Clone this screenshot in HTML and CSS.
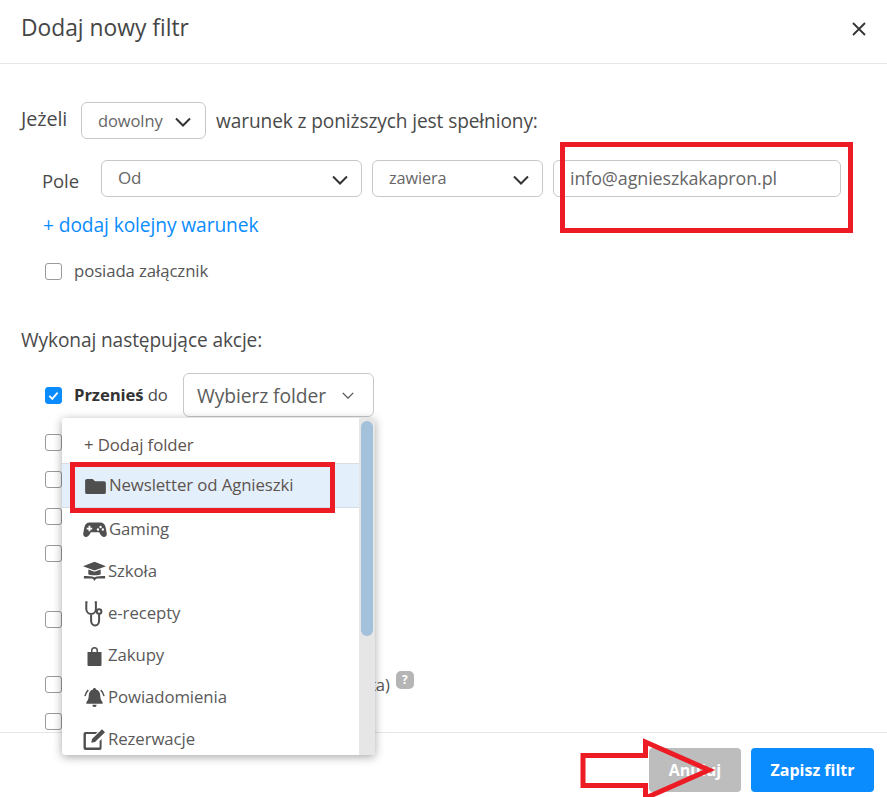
FILE: index.html
```html
<!DOCTYPE html>
<html lang="pl">
<head>
<meta charset="utf-8">
<title>Dodaj nowy filtr</title>
<link rel="stylesheet" href="styles.css">
</head>
<body>
<div class="modal">
  <header class="head">
    <h1 class="title">Dodaj nowy filtr</h1>
    <svg class="close" viewBox="0 0 14 14"><path d="M1 1l12 12M13 1L1 13"/></svg>
  </header>
  <main class="body">
    <div class="cond-line">
      <span class="cond-word">Jeżeli</span>
      <div class="select sel-any"><span>dowolny</span><svg class="chev" viewBox="0 0 16 10"><path d="M1 1.500l7 7 7-7"/></svg></div>
      <span>warunek z poniższych jest spełniony:</span>
    </div>
    <div class="field-line">
      <span class="field-word">Pole</span>
      <div class="select sel-field"><span>Od</span><svg class="chev" viewBox="0 0 16 10"><path d="M1 1.500l7 7 7-7"/></svg></div>
      <div class="select sel-op"><span>zawiera</span><svg class="chev" viewBox="0 0 16 10"><path d="M1 1.500l7 7 7-7"/></svg></div>
      <div class="select sel-value"><span>info@agnieszkakapron.pl</span></div>
    </div>
    <a class="add-cond">+ dodaj kolejny warunek</a>
    <div class="attach"><span class="box"></span><span class="attach-text">posiada załącznik</span></div>
    <div class="actions-head">Wykonaj następujące akcje:</div>
    <div class="move-line">
      <span class="box checked"><svg viewBox="0 0 18 18"><path d="M4 9.500l3.500 3.500L14 5.500"/></svg></span>
      <span class="move-label"><b>Przenieś</b> do</span>
      <div class="select sel-folder"><span>Wybierz folder</span><svg class="chev thin" viewBox="0 0 16 10"><path d="M2 2l6 6 6-6"/></svg></div>
    </div>
    <div class="box-list">
      <div class="box-row r1"><span class="box"></span></div>
      <div class="box-row r2"><span class="box"></span></div>
      <div class="box-row r2"><span class="box"></span></div>
      <div class="box-row r2"><span class="box"></span></div>
      <div class="box-row r3"><span class="box"></span></div>
      <div class="box-row r4"><span class="box"></span><span class="tail">ta)</span><span class="hint">?</span></div>
      <div class="box-row r2"><span class="box"></span></div>
    </div>
  </main>
  <footer class="foot">
    <button class="btn grey">Anuluj</button>
    <button class="btn blue">Zapisz filtr</button>
  </footer>

  <div class="menu">
    <div class="menu-list">
      <div class="item add">+ Dodaj folder</div>
      <div class="item active">
        <svg class="ico folder" viewBox="0 0 22 18"><path d="M2 1h6l2.500 2.500H20a2 2 0 0 1 2 2V15a2 2 0 0 1-2 2H2a2 2 0 0 1-2-2V3a2 2 0 0 1 2-2z"/></svg>
        <span>Newsletter od Agnieszki</span>
      </div>
      <div class="item">
        <svg class="ico pad" viewBox="0 0 26 18"><path fill-rule="evenodd" d="M7 1.500h12c3 0 5 2 5.700 6l1 5.500c.4 2.500-1 4-3 4-1.600 0-2.700-1-3.700-2.300L17.500 12h-9L7 14.700C6 16 4.900 17 3.300 17c-2 0-3.400-1.500-3-4l1-5.500C2 3.500 4 1.500 7 1.500zM6 5v2H4v2h2v2h2V9h2V7H8V5zm13 0a1.300 1.300 0 1 0 0 2.600A1.300 1.300 0 0 0 19 5zm-2.800 2.700a1.300 1.300 0 1 0 0 2.600 1.300 1.300 0 0 0 0-2.600zM21.500 7.700a1.300 1.300 0 1 0 0 2.600 1.300 1.300 0 0 0 0-2.600z"/></svg>
        <span>Gaming</span>
      </div>
      <div class="item">
        <svg class="ico tall" viewBox="0 0 26 22"><path d="M13 0L26 5 13 10 0 5zM6 8.800L13 11.300 20 8.800V14C18 15.500 8 15.500 6 14zM1 16c4 0 9 0 12 1.500C16 16 21 16 25 16v3h-9c-1 0-2 1-3 2.700C12 20 11 19 10 19H1z"/></svg>
        <span>Szkoła</span>
      </div>
      <div class="item">
        <svg class="ico steth" viewBox="0 0 20 26"><path d="M3 1.200H1.800V8c0 3 2.200 5 4.800 5s4.800-2 4.800-5V1.200h-1.200M6.600 13v6.500c0 3 1.800 5 4 5s4-2 4-5V13"/><circle cx="14.600" cy="10.500" r="2.300"/></svg>
        <span>e-recepty</span>
      </div>
      <div class="item">
        <svg class="ico bag" viewBox="0 0 14 19"><path fill-rule="evenodd" d="M3.500 5V3.500a3.500 3.500 0 0 1 7 0V5H14v13a1 1 0 0 1-1 1H1a1 1 0 0 1-1-1V5zM5 5h4V3.500a2 2 0 0 0-4 0z"/></svg>
        <span>Zakupy</span>
      </div>
      <div class="item">
        <svg class="ico tall" viewBox="0 0 22 22"><path d="M11 1c1 0 1.500.6 1.600 1.600C15.500 3.300 17 6 17 9c0 3 .9 5 2.500 7v1.500h-17V16C4.100 14 5 12 5 9c0-3 1.500-5.700 4.400-6.400C9.500 1.600 10 1 11 1zM8.800 18.500h4.400c0 1.300-1 2.500-2.200 2.500s-2.200-1.200-2.200-2.500z"/><path class="wave" d="M4.500 3.300C2.800 4.800 1.500 6.800 1 9.500M17.500 3.300c1.700 1.500 3 3.500 3.500 6.200"/></svg>
        <span>Powiadomienia</span>
      </div>
      <div class="item">
        <svg class="ico tall" viewBox="0 0 22 21"><path fill-rule="evenodd" d="M3 3h11l-2 2H3a.6.6 0 0 0-.6.6V18c0 .3.3.6.6.6h12.500c.3 0 .6-.3.6-.6v-6l2-2v9a2 2 0 0 1-2 2H2a2 2 0 0 1-2-2V5a2 2 0 0 1 2-2zM18.500.2l3 3L11.500 13l-3.700.8.700-3.700z"/></svg>
        <span>Rezerwacje</span>
      </div>
    </div>
    <div class="track"><div class="thumb"></div></div>
  </div>

  <svg class="marks" viewBox="0 0 887 797">
    <rect x="562.500" y="144.500" width="288" height="86"/>
    <rect x="72.500" y="464.500" width="260" height="46"/>
    <path d="M583 755.500H645.500V742L709 770L645.500 798V785.500H583Z"/>
  </svg>
</div>
</body>
</html>
```
FILE: styles.css
```css
* { box-sizing: border-box; }
html, body { margin: 0; padding: 0; background: #fff; }
body {
  font-family: "Open Sans", "Noto Sans", sans-serif;
  color: #4d4d4d;
  font-size: 16px;
  overflow: hidden;
}
.modal {
  position: relative;
  width: 887px;
  height: 797px;
  display: flex;
  flex-direction: column;
  overflow: hidden;
}
.head {
  height: 64px;
  flex: none;
  display: flex;
  align-items: flex-start;
  justify-content: space-between;
  padding: 10px 21px 0 21px;
  border-bottom: 1px solid #e6e6e6;
}
.title {
  margin: 0;
  font-size: 22.800px;
  line-height: 36px;
  font-weight: 400;
  color: #454545;
}
.close { width: 14px; height: 14px; margin-top: 12px; fill: none; stroke: #333; stroke-width: 1.800; }
.body {
  flex: 1;
  min-height: 0;
  overflow: hidden;
  padding: 38px 0 0 21px;
  letter-spacing: -0.1px;
}
.cond-line {
  display: flex;
  align-items: center;
  height: 37px;
  gap: 10px;
  font-size: 19.100px;
  color: #4a4a4a;
}
.cond-word { width: 50px; flex: none; margin-top: -4px; font-size: 19.800px; }
.select {
  display: flex;
  align-items: center;
  justify-content: space-between;
  height: 37px;
  flex: none;
  border: 1px solid #c8c8c8;
  border-radius: 6px;
  padding: 0 16px;
  font-size: 16.500px;
  color: #666;
  background: #fff;
}
.chev { width: 16px; height: 10px; margin-top: 3px; fill: none; stroke: #333; stroke-width: 2; flex: none; }
.chev.thin { width: 14px; height: 9px; margin-top: 0; stroke: #555; stroke-width: 1.600; }
.sel-any { width: 125px; padding-right: 14px; }
.field-line {
  display: flex;
  align-items: center;
  height: 37px;
  margin: 21px 0 0 21px;
  gap: 10px;
}
.field-word { width: 49px; margin: 4px 0 0 0; font-size: 18.500px; color: #4a4a4a; }
.sel-field { width: 261px; padding-right: 13px; font-size: 17px; }
.sel-field span, .sel-op span { margin-top: -2px; }
.sel-op { width: 171px; padding-right: 13px; font-size: 16.300px; }
.sel-value { width: 288px; padding-left: 16px; font-size: 17.900px; }
.sel-value span { margin-top: -2px; }
.add-cond {
  display: block;
  margin: 16px 0 0 22px;
  font-size: 19.200px;
  line-height: 24px;
  color: #0a8cff;
}
.attach {
  display: flex;
  align-items: center;
  gap: 12px;
  height: 20px;
  margin: 24px 0 0 24px;
  font-size: 16.800px;
  color: #555;
}
.attach-text { margin-top: -2px; }
.box {
  display: block;
  flex: none;
  width: 17px;
  height: 17px;
  border: 1px solid #9a9a9a;
  border-radius: 3px;
  background: #fff;
}
.box.checked { background: #0a8cff; border-color: #0a8cff; }
.box.checked svg { display: block; width: 15px; height: 15px; fill: none; stroke: #fff; stroke-width: 2.200; }
.actions-head {
  margin-top: 47px;
  font-size: 19.100px;
  line-height: 24px;
  color: #4a4a4a;
}
.move-line {
  display: flex;
  align-items: center;
  height: 44px;
  margin: 21px 0 0 24px;
}
.move-label { margin: -2px 0 0 12px; width: 109px; flex: none; font-size: 16.700px; color: #4d4d4d; }
.move-label b { color: #333; font-weight: 700; }
.sel-folder {
  width: 191px;
  height: 44px;
  padding: 0 18px 0 13px;
  font-size: 19.300px;
  color: #5c5c5c;
}
.box-list { margin: 17px 0 0 24px; }
.box-row { display: flex; align-items: center; height: 17px; }
.r1 { margin-top: 0; }
.r2 { margin-top: 20px; }
.r3 { margin-top: 49px; }
.r4 { margin-top: 48px; }
.tail { margin-left: 308px; font-size: 16.700px; color: #555; }
.hint {
  margin-left: 6px;
  margin-top: -10px;
  width: 18px;
  height: 18px;
  border-radius: 5px;
  background: #b5b5b5;
  color: #fff;
  font-size: 12px;
  font-weight: 700;
  line-height: 18px;
  text-align: center;
}
.foot {
  flex: none;
  height: 65px;
  border-top: 1px solid #e6e6e6;
  display: flex;
  justify-content: flex-end;
  gap: 10px;
  padding: 15px 13px 0 0;
}
.btn {
  height: 44px;
  border: 0;
  border-radius: 4px;
  font-family: inherit;
  font-size: 16px;
  font-weight: 700;
  color: #fff;
  padding: 0;
}
.btn.grey { width: 92px; background: #bdbdbd; }
.btn.blue { width: 123px; background: #0a8cff; }
.menu {
  position: absolute;
  left: 62px;
  top: 418px;
  width: 313px;
  height: 337px;
  display: flex;
  background: #fff;
  border-radius: 3px;
  box-shadow: 0 2px 10px rgba(0,0,0,.35);
  overflow: hidden;
}
.menu-list { flex: 1; min-width: 0; padding-top: 3px; }
.item {
  display: flex;
  align-items: center;
  gap: 2px;
  height: 42px;
  padding: 0 0 2px 21px;
  font-size: 16.800px;
  color: #5a5a5a;
  letter-spacing: -0.1px;
}
.item.add { height: 43px; border-bottom: 1px solid #ddd; padding: 4px 0 0 22px; color: #5d5450; }
.item.active { height: 44px; background: #e3effb; border-bottom: 1px solid #d5dde5; padding-left: 23px; color: #5d5450; }
.ico { width: 23px; height: 19px; fill: #4f4f4f; flex: none; margin-top: 3px; }
.ico.folder { width: 21px; height: 17px; margin-right: 1px; }
.ico.pad { width: 24px; }
.ico.tall { height: 21px; }
.ico .wave { fill: none; stroke: #4f4f4f; stroke-width: 1.500; }
.ico.steth { height: 26px; margin-top: 4px; fill: none; stroke: #4f4f4f; stroke-width: 2; }
.ico.bag { height: 19px; margin-top: 5px; }
.track { width: 16px; flex: none; background: #e6e6e6; padding: 3px 2px 0; }
.thumb { height: 215px; border-radius: 6px; background: #a3c1da; }
.marks {
  position: absolute;
  left: 0;
  top: 0;
  width: 887px;
  height: 797px;
  fill: none;
  stroke: #ed1c24;
  stroke-width: 5;
  pointer-events: none;
}
```
